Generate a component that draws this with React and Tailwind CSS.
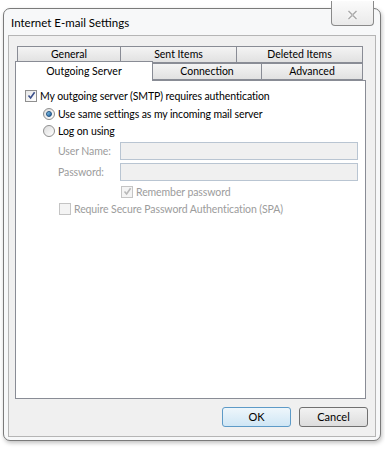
import React from 'react';

const font = { fontFamily: 'Lato, "Noto Sans", sans-serif' };

const Tab = ({ label, w, selected }) => (
  <div
    className={
      selected
        ? 'relative z-10 -mb-px h-[20px] -mt-[2px] flex items-center justify-center border border-b-0 border-[#898c95] bg-white text-[10.5px] text-black'
        : 'h-[17px] flex items-center justify-center border border-[#898c95] bg-gradient-to-b from-[#f4f4f4] to-[#e1e1e1] text-[10.5px] text-black -ml-px first:ml-0'
    }
    style={{ width: w }}
  >
    {label}
  </div>
);

const Check = ({ checked, disabled }) => (
  <div
    className={
      'w-[12px] h-[12px] border flex items-center justify-center shrink-0 ' +
      (disabled ? 'border-[#c4c4c4] bg-[#f4f4f4]' : 'border-[#8f8f8f] bg-gradient-to-br from-[#e6e6e6] to-white')
    }
  >
    {checked && (
      <svg width="9" height="9" viewBox="0 0 9 9">
        <path d="M1.5 4.5 L3.6 7 L7.6 1.2" fill="none" stroke={disabled ? '#b8b8b8' : '#3a4f8a'} strokeWidth="1.6" />
      </svg>
    )}
  </div>
);

const Radio = ({ checked }) => (
  <div className="w-[12px] h-[12px] rounded-full border border-[#8f8f8f] bg-gradient-to-br from-[#dcdcdc] to-white flex items-center justify-center shrink-0">
    {checked && <div className="w-[6px] h-[6px] rounded-full bg-gradient-to-br from-[#8fd0f0] to-[#1a5a98] border border-[#1e4f80]" />}
  </div>
);

export default function App() {
  return (
    <div className="w-[385px] h-[450px] bg-white overflow-hidden" style={font}>
      <div className="ml-[3px] mt-[8px] w-[378px] h-[433px] rounded-[7px] border border-[#7a7a7a] bg-[#f7f8f9] shadow-[1px_2px_4px_rgba(0,0,0,0.25)] flex flex-col">
        {/* title bar */}
        <div className="h-[26px] flex items-start justify-between">
          <div className="pl-[7px] pt-[6px] text-[11.5px] leading-[16px] text-black">Internet E-mail Settings</div>
          <div className="mr-[6px] -mt-[8px] w-[43px] h-[25px] border border-[#8a8a8a] border-t-0 rounded-b-[4px] bg-gradient-to-b from-[#fbfbfb] to-[#eaeaea] flex items-center justify-center pt-[3px]">
            <svg width="11" height="10" viewBox="0 0 11 10">
              <path d="M1.5 1 L9.5 9 M9.5 1 L1.5 9" stroke="#fff" strokeWidth="3.2" />
              <path d="M1.5 1 L9.5 9 M9.5 1 L1.5 9" stroke="#8d8d8d" strokeWidth="1.6" />
              <path d="M1.5 1 L9.5 9 M9.5 1 L1.5 9" stroke="#f3f3f3" strokeWidth="0.6" />
            </svg>
          </div>
        </div>

        {/* client area */}
        <div className="mx-[4px] mb-[3px] flex-1 border border-[#b5b5b5] bg-[#f0f0f0] flex flex-col px-[6px] pt-[10px]">
          <div className="flex flex-col">
            <div className="flex ml-[2px]">
              <Tab label="General" w={104} />
              <Tab label="Sent Items" w={117} />
              <Tab label="Deleted Items" w={127} />
            </div>
            <div className="flex">
              <Tab label="Outgoing Server" w={138} selected />
              <Tab label="Connection" w={110} />
              <Tab label="Advanced" w={102} />
            </div>
          </div>

          <div className="w-[351px] h-[319px] border border-[#898c95] bg-white pl-[9px] pt-[8px] text-[10.5px] leading-[14px] tracking-[-0.1px]">
            <div className="flex items-center gap-[3px] h-[13px]">
              <Check checked />
              <span className="text-black">My outgoing server (SMTP) requires authentication</span>
            </div>
            <div className="pl-[18px] mt-[5px] flex flex-col gap-[4px]">
              <div className="flex items-center gap-[3px] h-[13px]">
                <Radio checked />
                <span className="text-black">Use same settings as my incoming mail server</span>
              </div>
              <div className="flex items-center gap-[3px] h-[13px]">
                <Radio />
                <span className="text-black">Log on using</span>
              </div>
            </div>
            <div className="pl-[33px] mt-[5px] flex flex-col gap-[3px] text-[#9c9c9c]">
              <div className="flex items-center h-[18px]">
                <span className="w-[62px]">User Name:</span>
                <div className="w-[238px] h-[18px] border border-[#b9c5d2] bg-[#f0f0f0]" />
              </div>
              <div className="flex items-center h-[18px]">
                <span className="w-[62px]">Password:</span>
                <div className="w-[238px] h-[18px] border border-[#b9c5d2] bg-[#f0f0f0]" />
              </div>
            </div>
            <div className="pl-[96px] mt-[4px] flex items-center gap-[3px] h-[13px] text-[#9c9c9c]">
              <Check checked disabled />
              <span>Remember password</span>
            </div>
            <div className="pl-[34px] mt-[4px] flex items-center gap-[3px] h-[13px] text-[#9c9c9c]">
              <Check disabled />
              <span>Require Secure Password Authentication (SPA)</span>
            </div>
          </div>

          <div className="flex justify-end gap-[8px] mt-[8px] pr-[1px]">
            <button className="w-[69px] h-[20px] rounded-[3px] border border-[#5d9ac7] bg-gradient-to-b from-[#eef6fb] to-[#cfe6f5] text-[11px] text-black">
              OK
            </button>
            <button className="w-[69px] h-[20px] rounded-[3px] border border-[#707070] bg-gradient-to-b from-[#f2f2f2] to-[#dddddd] text-[11px] text-black">
              Cancel
            </button>
          </div>
        </div>
      </div>
    </div>
  );
}
